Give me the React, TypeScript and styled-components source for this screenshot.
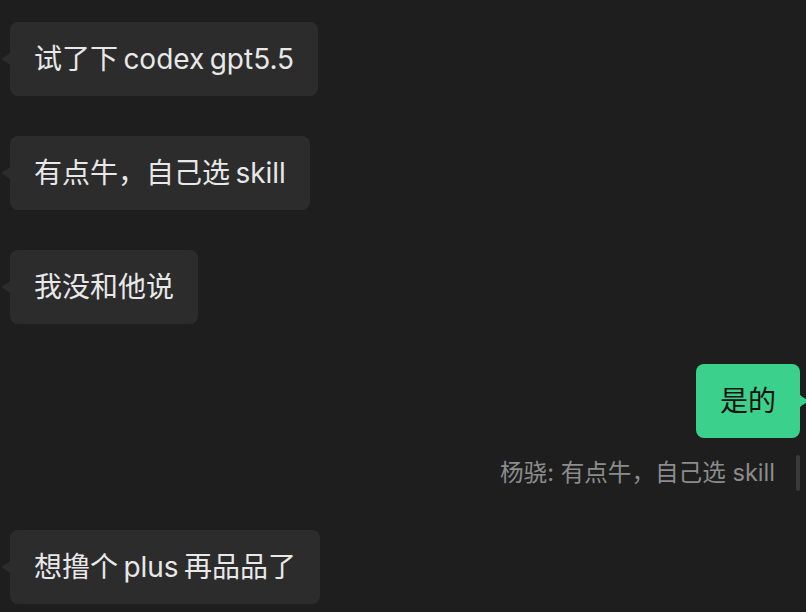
import styled, { createGlobalStyle } from "styled-components";

const GlobalStyle = createGlobalStyle`
  html, body {
    margin: 0;
    padding: 0;
    background: #1e1e1e;
  }
  body {
    font-family: Inter, "Noto Sans CJK SC", sans-serif;
  }
`;

type Side = "left" | "right";

type Message =
  | { kind: "bubble"; side: Side; text: string }
  | { kind: "quote"; text: string };

const messages: Message[] = [
  { kind: "bubble", side: "left", text: "试了下 codex gpt5.5" },
  { kind: "bubble", side: "left", text: "有点牛，自己选 skill" },
  { kind: "bubble", side: "left", text: "我没和他说" },
  { kind: "bubble", side: "right", text: "是的" },
  { kind: "quote", text: "杨骁: 有点牛，自己选 skill" },
  { kind: "bubble", side: "left", text: "想撸个 plus 再品品了" },
];

const Tail = ({ side }: { side: Side }) => (
  <TailSvg $side={side} width="10" height="18" viewBox="0 0 10 18">
    {side === "left" ? (
      <path d="M10 0 C10 5 1 7 1 9 C1 11 10 13 10 18 Z" />
    ) : (
      <path d="M0 0 C0 5 9 7 9 9 C9 11 0 13 0 18 Z" />
    )}
  </TailSvg>
);

export default function App() {
  return (
    <>
      <GlobalStyle />
      <Chat>
        {messages.map((m, i) =>
          m.kind === "bubble" ? (
            <Row key={i} $side={m.side}>
              <Bubble $side={m.side}>
                <Tail side={m.side} />
                {m.text}
              </Bubble>
            </Row>
          ) : (
            <QuoteRow key={i}>
              <QuoteText>{m.text}</QuoteText>
              <QuoteBar />
            </QuoteRow>
          )
        )}
      </Chat>
    </>
  );
}

const Chat = styled.main`
  display: flex;
  flex-direction: column;
  gap: 40px;
  padding: 22px 6px 0 10px;
  width: 806px;
  height: 612px;
  box-sizing: border-box;
  overflow: hidden;
`;

const Row = styled.div<{ $side: Side }>`
  display: flex;
  justify-content: ${(p) => (p.$side === "left" ? "flex-start" : "flex-end")};
`;

const Bubble = styled.div<{ $side: Side }>`
  position: relative;
  padding: 17px 24px;
  border-radius: 8px;
  background: ${(p) => (p.$side === "left" ? "#2c2c2c" : "#3bd18c")};
  color: ${(p) => (p.$side === "left" ? "#e8e8e8" : "#111111")};
  font-size: 28px;
  line-height: 40px;
  word-spacing: -2.5px;
  white-space: nowrap;
`;

const TailSvg = styled.svg<{ $side: Side }>`
  position: absolute;
  top: 50%;
  margin-top: -9px;
  ${(p) => (p.$side === "left" ? "left: -9px;" : "right: -9px;")}
  fill: ${(p) => (p.$side === "left" ? "#2c2c2c" : "#3bd18c")};
`;

const QuoteRow = styled.div`
  display: flex;
  justify-content: flex-end;
  align-items: center;
  gap: 21px;
  margin-top: -23px;
  margin-bottom: -1px;
`;

const QuoteText = styled.div`
  color: #8c8c8c;
  font-size: 23.6px;
  line-height: 36px;
  white-space: nowrap;
`;

const QuoteBar = styled.div`
  width: 4px;
  height: 36px;
  border-radius: 2px;
  background: #3a3a3a;
`;
